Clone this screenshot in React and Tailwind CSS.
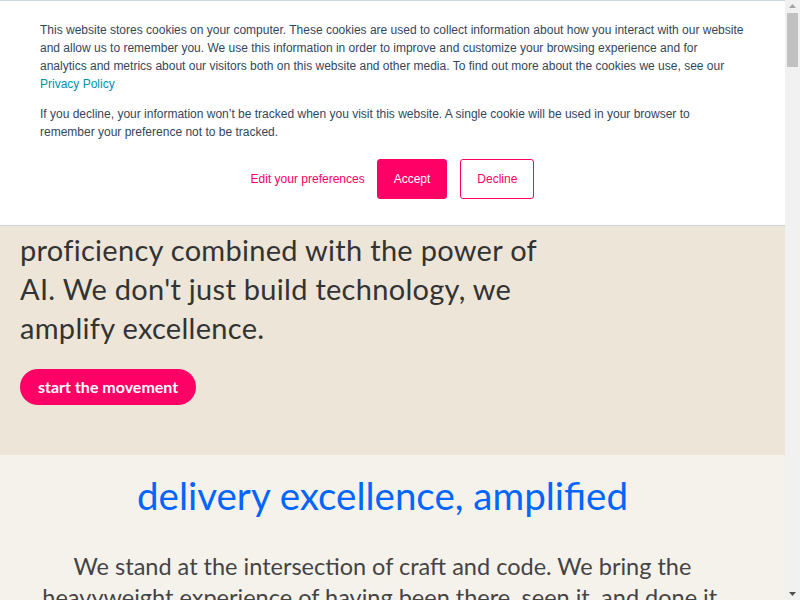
import React from "react";

const CookieBanner = () => (
  <div className="fixed top-0 left-0 right-[15px] z-50 bg-white border-t border-b border-[#cbd6e2] px-10 pt-[20px] pb-[26px] font-['Liberation_Sans',Arial,sans-serif] text-[12px] leading-[18px] text-[#33475b]">
    <p>
      This website stores cookies on your computer. These cookies are used to collect information about how you interact
      with our website and allow us to remember you. We use this information in order to improve and customize your
      browsing experience and for analytics and metrics about our visitors both on this website and other media. To find
      out more about the cookies we use, see our{" "}
      <a href="#" className="text-[#0091ae]">
        Privacy Policy
      </a>
    </p>
    <p className="mt-[12px]">
      If you decline, your information won’t be tracked when you visit this website. A single cookie will be used in your
      browser to remember your preference not to be tracked.
    </p>
    <div className="mt-[18px] flex items-center justify-center">
      <a href="#" className="text-[#ff0066] mr-[12px]">
        Edit your preferences
      </a>
      <button className="h-10 px-4 rounded-[3px] bg-[#ff0066] text-white border border-[#ff0066]">Accept</button>
      <button className="ml-[13px] h-10 px-[16px] rounded-[3px] bg-white text-[#ff0066] border border-[#ff0066]">
        Decline
      </button>
    </div>
  </div>
);

const Scrollbar = () => (
  <div className="fixed top-0 right-0 bottom-0 z-50 w-[15px] bg-[#f1f1f1] flex flex-col items-center">
    <svg width="15" height="13" viewBox="0 0 15 13" className="shrink-0">
      <path d="M4 8 L7.5 4 L11 8 Z" fill="#a3a3a3" />
    </svg>
    <div className="w-[11px] h-[54px] bg-[#c1c1c1]" />
    <div className="flex-1" />
    <svg width="15" height="13" viewBox="0 0 15 13" className="shrink-0">
      <path d="M4 5 L11 5 L7.5 9 Z" fill="#505050" />
    </svg>
  </div>
);

export default function App() {
  return (
    <div className="font-['Lato',sans-serif] mr-[15px]">
      <CookieBanner />
      <Scrollbar />

      <section className="bg-[#ede5d7] px-5 pt-[112px] pb-[50px]">
        <h1 className="text-[44px] leading-[52px] font-bold text-[#333]">amplify delivery</h1>
        <p className="mt-[27px] text-[29px] leading-[39px] text-[#333] max-w-[545px] tracking-[0.01em]">Human</p>
        <p className="text-[29px] leading-[39px] text-[#333] max-w-[545px] tracking-[0.01em]">
          proficiency combined with the power of AI. We don't just build technology, we amplify excellence.
        </p>
        <a
          href="#"
          className="mt-[22px] inline-flex items-center h-9 px-[18px] rounded-full bg-[#ff0066] text-white font-bold text-[16px]"
        >
          start the movement
        </a>
      </section>

      <section className="bg-[#f5f2ec] pt-[17px] pb-20 pl-0 pr-5 text-center">
        <h2 className="text-[38.5px] leading-[46px] text-[#0066ff]">delivery excellence, amplified</h2>
        <p className="mt-[33px] mx-auto max-w-[720px] text-[23.5px] leading-[31px] text-[#444]">
          We stand at the intersection of craft and code. We bring the heavyweight experience of having been there, seen
          it, and done it.
        </p>
      </section>

      <div className="h-[5200px] bg-[#f5f2ec]" />
    </div>
  );
}
